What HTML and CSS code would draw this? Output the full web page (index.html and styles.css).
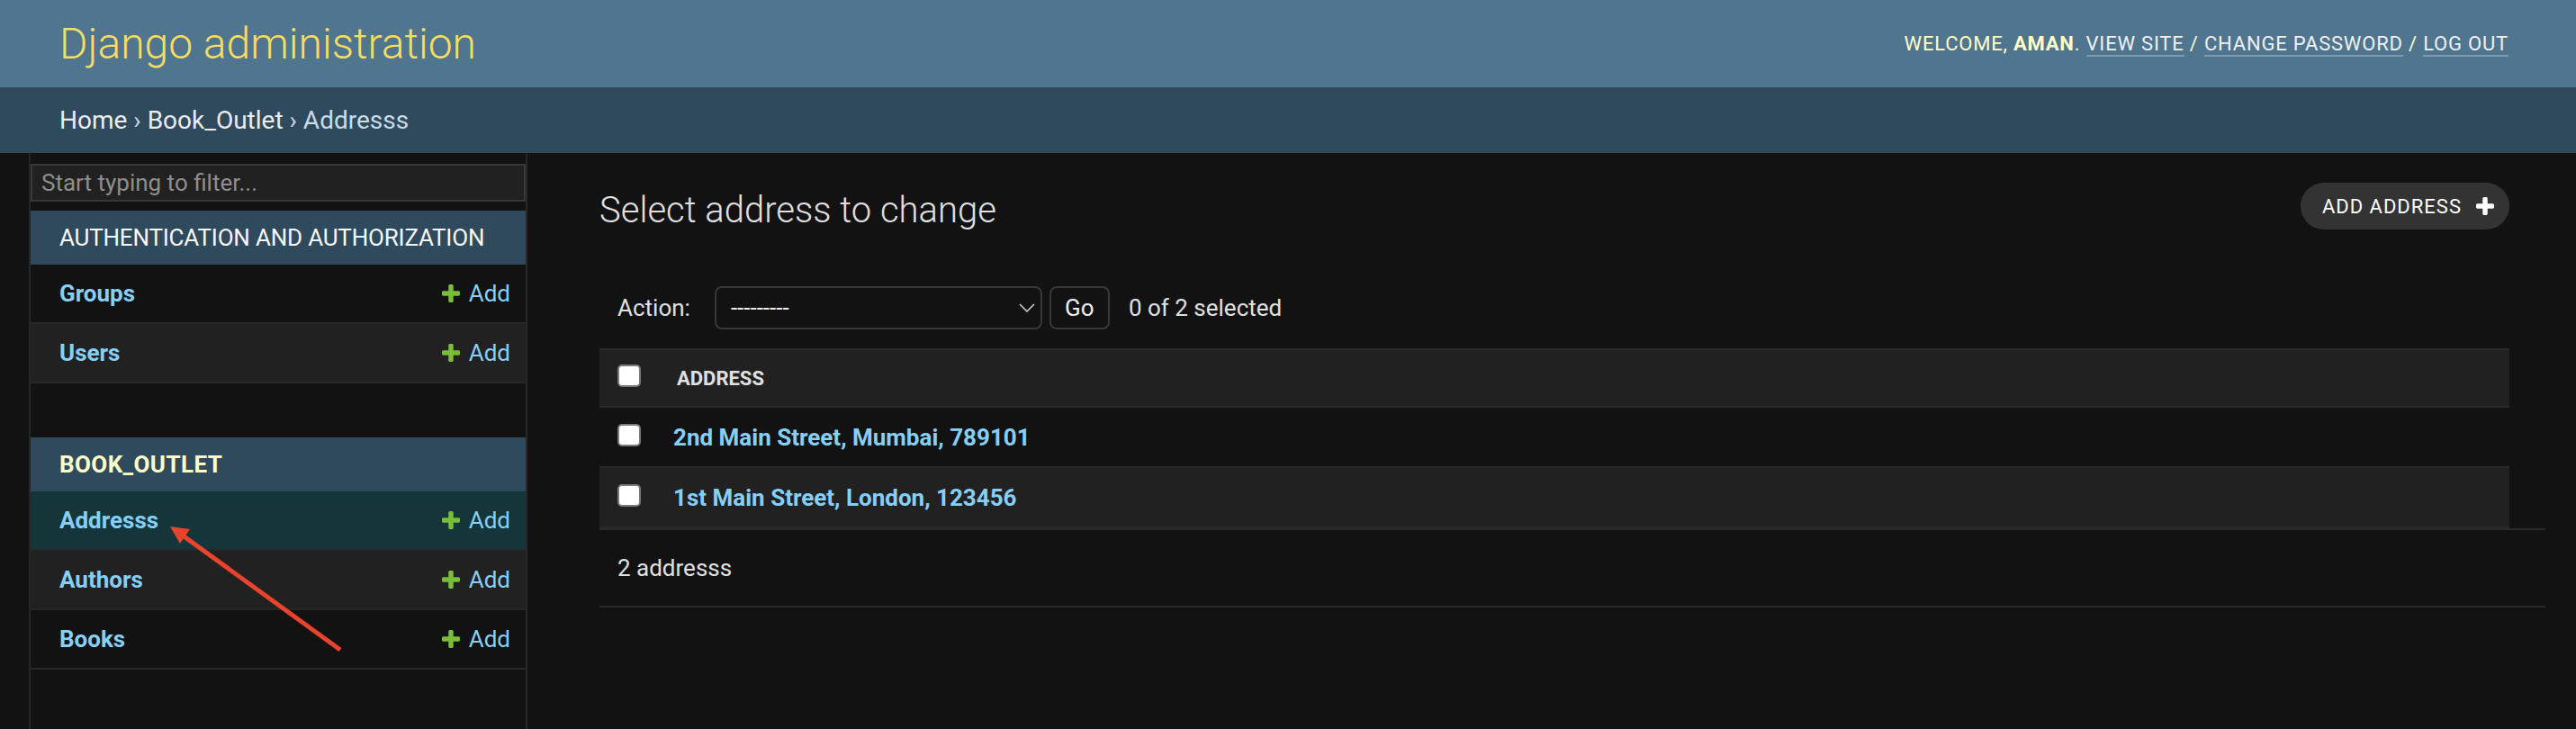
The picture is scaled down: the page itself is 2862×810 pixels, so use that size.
FILE: index.html
```html
<!DOCTYPE html>
<html lang="en">
<head>
<meta charset="utf-8">
<title>Select address to change | Django site admin</title>
<link rel="stylesheet" href="styles.css">
</head>
<body>
<header class="site-header">
  <div class="branding"><h1 class="brand-title">Django administration</h1></div>
  <div class="user-tools">Welcome, <strong>Aman</strong>. <a href="#">View site</a> / <a href="#">Change password</a> / <a href="#">Log out</a></div>
</header>
<nav class="breadcrumbs"><a href="#">Home</a> › <a href="#">Book_Outlet</a> › Addresss</nav>
<div class="main">
  <div class="toggle-nav"></div>
  <aside class="sidebar">
    <input class="nav-filter" type="search" placeholder="Start typing to filter...">
    <div class="app-module">
      <div class="app-caption">Authentication and Authorization</div>
      <div class="model-row"><a class="model-link" href="#">Groups</a><a class="addlink" href="#"><svg viewBox="192 188 1408 1408"><path d="M1600 796v192q0 40-28 68t-68 28h-416v416q0 40-28 68t-68 28h-192q-40 0-68-28t-28-68v-416h-416q-40 0-68-28t-28-68v-192q0-40 28-68t68-28h416v-416q0-40 28-68t68-28h192q40 0 68 28t28 68v416h416q40 0 68 28t28 68z"/></svg>Add</a></div>
      <div class="model-row alt"><a class="model-link" href="#">Users</a><a class="addlink" href="#"><svg viewBox="192 188 1408 1408"><path d="M1600 796v192q0 40-28 68t-68 28h-416v416q0 40-28 68t-68 28h-192q-40 0-68-28t-28-68v-416h-416q-40 0-68-28t-28-68v-192q0-40 28-68t68-28h416v-416q0-40 28-68t68-28h192q40 0 68 28t28 68v416h416q40 0 68 28t28 68z"/></svg>Add</a></div>
    </div>
    <div class="app-module current-app">
      <div class="app-caption">Book_Outlet</div>
      <div class="model-row current"><a class="model-link" href="#">Addresss</a><a class="addlink" href="#"><svg viewBox="192 188 1408 1408"><path d="M1600 796v192q0 40-28 68t-68 28h-416v416q0 40-28 68t-68 28h-192q-40 0-68-28t-28-68v-416h-416q-40 0-68-28t-28-68v-192q0-40 28-68t68-28h416v-416q0-40 28-68t68-28h192q40 0 68 28t28 68v416h416q40 0 68 28t28 68z"/></svg>Add</a></div>
      <div class="model-row alt"><a class="model-link" href="#">Authors</a><a class="addlink" href="#"><svg viewBox="192 188 1408 1408"><path d="M1600 796v192q0 40-28 68t-68 28h-416v416q0 40-28 68t-68 28h-192q-40 0-68-28t-28-68v-416h-416q-40 0-68-28t-28-68v-192q0-40 28-68t68-28h416v-416q0-40 28-68t68-28h192q40 0 68 28t28 68v416h416q40 0 68 28t28 68z"/></svg>Add</a></div>
      <div class="model-row"><a class="model-link" href="#">Books</a><a class="addlink" href="#"><svg viewBox="192 188 1408 1408"><path d="M1600 796v192q0 40-28 68t-68 28h-416v416q0 40-28 68t-68 28h-192q-40 0-68-28t-28-68v-416h-416q-40 0-68-28t-28-68v-192q0-40 28-68t68-28h416v-416q0-40 28-68t68-28h192q40 0 68 28t28 68v416h416q40 0 68 28t28 68z"/></svg>Add</a></div>
    </div>
  </aside>
  <main class="content">
    <div class="form-wrap">
      <div class="content-head">
        <h1 class="page-title">Select address to change</h1>
        <a class="object-tool" href="#">Add address<svg viewBox="192 188 1408 1408"><path d="M1600 796v192q0 40-28 68t-68 28h-416v416q0 40-28 68t-68 28h-192q-40 0-68-28t-28-68v-416h-416q-40 0-68-28t-28-68v-192q0-40 28-68t68-28h416v-416q0-40 28-68t68-28h192q40 0 68 28t28 68v416h416q40 0 68 28t28 68z"/></svg></a>
      </div>
      <div class="actions">
        <span class="action-label">Action:</span>
        <div class="select"><span>---------</span><svg viewBox="0 0 18 10"><path d="M1 1 L9 9 L17 1"/></svg></div>
        <button class="go-btn" type="button">Go</button>
        <span class="action-counter">0 of 2 selected</span>
      </div>
      <div class="result-list">
        <div class="result-head"><input class="check" type="checkbox"><span class="col-label">Address</span></div>
        <div class="result-row"><input class="check" type="checkbox"><a class="row-link" href="#">2nd Main Street, Mumbai, 789101</a></div>
        <div class="result-row alt"><input class="check" type="checkbox"><a class="row-link" href="#">1st Main Street, London, 123456</a></div>
      </div>
    </div>
    <p class="paginator">2 addresss</p>
  </main>
</div>
<svg class="annotation" viewBox="0 0 2862 810">
  <line x1="378" y1="722" x2="203" y2="595" stroke="#e8432c" stroke-width="5"/>
  <polygon points="189,585 211,588 200,604" fill="#e8432c"/>
</svg>
</body>
</html>
```

FILE: styles.css
```css
* { box-sizing: border-box; }
html, body { height: 100%; }
body {
  margin: 0;
  background: #121212;
  color: #eeeeee;
  font-family: Roboto, "Liberation Sans", sans-serif;
  font-size: 26px;
  display: flex;
  flex-direction: column;
  overflow: hidden;
  position: relative;
}
a { text-decoration: none; }

/* Header */
.site-header {
  flex: 0 0 97px;
  background: #4f758f;
  display: flex;
  align-items: center;
  justify-content: space-between;
  padding: 0 75px 0 66px;
}
.brand-title {
  margin: 0;
  font-size: 48px;
  font-weight: 300;
  color: #f5dd64;
  line-height: normal;
}
.user-tools {
  font-size: 22px;
  letter-spacing: 0.8px;
  text-transform: uppercase;
  color: #ffffcc;
  font-weight: 400;
}
.user-tools strong { font-weight: 700; }
.user-tools a {
  color: #eef1f4;
  border-bottom: 2px solid rgba(255, 255, 255, 0.28);
}

/* Breadcrumbs */
.breadcrumbs {
  flex: 0 0 73px;
  background: #2f4a5c;
  padding: 20px 66px;
  font-size: 28px;
  line-height: 33px;
  color: #c8dbe7;
}
.breadcrumbs a { color: #ececec; }

/* Main */
.main {
  flex: 1;
  display: flex;
  min-height: 0;
}
.toggle-nav {
  flex: 0 0 34px;
  border-right: 2px solid #262626;
}
.sidebar {
  flex: 0 0 552px;
  width: 552px;
  min-width: 0;
  overflow: hidden;
  border-right: 2px solid #262626;
  border-top: 2px solid transparent;
}
.nav-filter {
  display: block;
  width: 100%;
  height: 42px;
  margin: 10px 0;
  padding: 4px 10px;
  border: 2px solid #383838;
  background: #212121;
  color: #eeeeee;
  font-family: inherit;
  font-size: 26px;
  outline: none;
}
.nav-filter::placeholder { color: #8e8e8e; }

.app-module { margin-bottom: 60px; }
.app-caption {
  height: 60px;
  background: #2f4a5c;
  padding: 16px 32px;
  font-size: 26px;
  line-height: 28px;
  letter-spacing: -0.2px;
  white-space: nowrap;
  text-transform: uppercase;
  color: #f7f7f7;
}
.current-app .app-caption { color: #ffffcc; font-weight: 700; letter-spacing: 0.4px; }
.model-row {
  display: flex;
  justify-content: space-between;
  align-items: center;
  height: 66px;
  padding: 0 17px 0 32px;
  border-bottom: 2px solid #262626;
}
.model-row.alt { background: #212121; }
.model-row.current { background: #14353a; }
.model-link { color: #86cff6; font-weight: 700; }
.addlink {
  color: #86cff6;
  display: flex;
  align-items: center;
  gap: 10px;
}
.addlink svg { width: 20px; height: 20px; fill: #78be36; }

/* Content */
.content {
  flex: 1;
  min-width: 0;
  padding: 40px 34px 0 80px;
}
.form-wrap { margin-right: 40px; }
.content-head {
  display: flex;
  justify-content: space-between;
  align-items: flex-start;
  margin-bottom: 40px;
}
.page-title {
  margin: 0;
  font-size: 40px;
  font-weight: 300;
  line-height: 47px;
  color: #e0e0e0;
}
.object-tool {
  margin-top: -7px;
  height: 52px;
  padding: 0 17px 0 24px;
  border-radius: 26px;
  background: #333333;
  color: #ffffff;
  font-size: 22px;
  letter-spacing: 1px;
  text-transform: uppercase;
  display: flex;
  align-items: center;
  gap: 16px;
}
.object-tool svg { width: 20px; height: 20px; fill: #ffffff; }

.actions {
  display: flex;
  align-items: center;
  height: 90px;
  padding: 20px;
}
.action-label { color: #e0e0e0; margin-right: 27px; }
.select {
  width: 364px;
  height: 48px;
  border: 2px solid #383838;
  border-radius: 8px;
  display: flex;
  align-items: center;
  justify-content: space-between;
  padding: 0 6px 0 16px;
  color: #eeeeee;
}
.select svg {
  width: 18px;
  height: 10px;
  fill: none;
  stroke: #cccccc;
  stroke-width: 1.6;
}
.go-btn {
  margin-left: 8px;
  width: 67px;
  height: 48px;
  border: 2px solid #383838;
  border-radius: 8px;
  background: #121212;
  color: #eeeeee;
  font-family: inherit;
  font-size: 26px;
  padding: 0;
}
.action-counter { margin-left: 21px; color: #e0e0e0; }

.result-head, .result-row {
  display: flex;
  align-items: center;
  height: 67px;
  padding-left: 20px;
  border-bottom: 2px solid #2a2a2a;
}
.result-head {
  height: 66px;
  background: #212121;
  border-top: 2px solid #2a2a2a;
}
.result-row.alt { background: #212121; }
.check {
  appearance: none;
  width: 26px;
  height: 25px;
  margin: 0 0 5px 0;
  background: #ffffff;
  border: 2px solid #7a7a7a;
  border-radius: 5px;
}
.col-label {
  margin-left: 40px;
  font-size: 22px;
  font-weight: 700;
  text-transform: uppercase;
  color: #e0e0e0;
}
.row-link {
  margin-left: 36px;
  color: #86cff6;
  font-weight: 700;
}

.paginator {
  margin: 0;
  padding: 20px;
  line-height: 44px;
  font-size: 26px;
  color: #e0e0e0;
  border-top: 2px solid #2a2a2a;
  border-bottom: 2px solid #2a2a2a;
}

/* Annotation overlay */
.annotation {
  position: absolute;
  left: 0;
  top: 0;
  width: 2862px;
  height: 810px;
  pointer-events: none;
}
```
